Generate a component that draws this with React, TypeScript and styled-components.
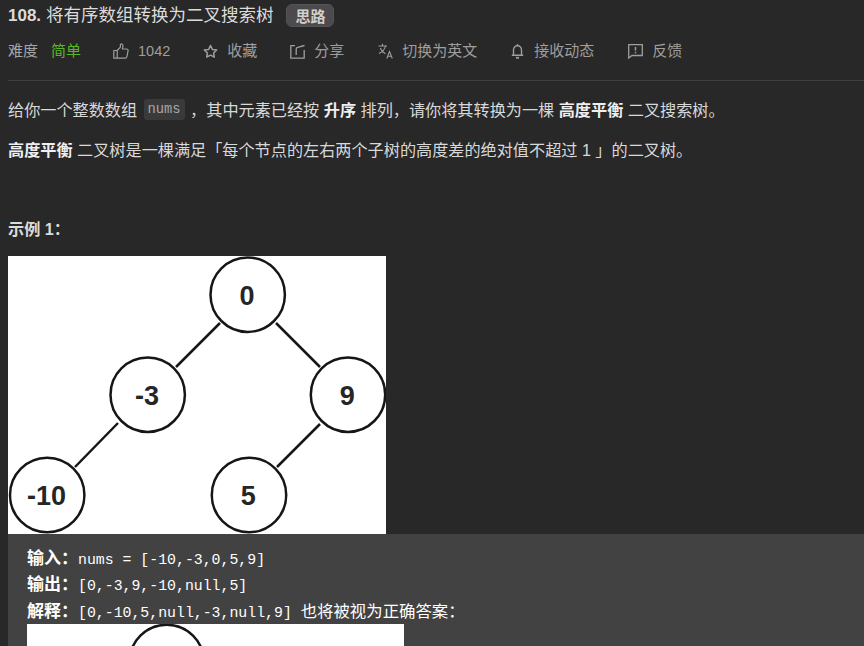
import React from 'react';
import styled, { createGlobalStyle } from 'styled-components';

const GlobalStyle = createGlobalStyle`
  html, body {
    margin: 0;
    padding: 0;
    height: 646px;
    overflow: hidden;
    background: #282828;
  }
`;

const Root = styled.div`
  height: 646px;
  overflow: hidden;
  padding: 0 0 0 8px;
  box-sizing: border-box;
  background: #282828;
  color: #a6a6a6;
  font-family: 'Liberation Sans', 'Noto Sans CJK SC', sans-serif;
  font-size: 15px;
`;

const TitleRow = styled.div`
  display: flex;
  align-items: center;
  height: 30px;
`;

const Title = styled.h1`
  margin: 0;
  font-size: 17.5px;
  font-weight: 400;
  color: #dcdcdc;
  line-height: 30px;
  white-space: nowrap;
`;

const TitleNum = styled.span`
  font-weight: 700;
  font-size: 17px;
`;

const Tag = styled.span`
  margin-left: 13px;
  width: 48px;
  height: 23px;
  margin-top: 1px;
  box-sizing: border-box;
  border: 1px solid #555355;
  border-radius: 6px;
  background: #4c4a4c;
  color: #d0d0d0;
  font-size: 15px;
  font-weight: 700;
  display: flex;
  align-items: center;
  justify-content: center;
`;

const MetaRow = styled.div`
  display: flex;
  align-items: center;
  height: 20px;
  margin-top: 11px;
  white-space: nowrap;
`;

const MetaItem = styled.span<{ $gap: number }>`
  display: flex;
  align-items: center;
  margin-left: ${(p) => p.$gap}px;
  color: #9e9e9e;
  svg {
    display: block;
    margin-right: 9px;
  }
`;

// the CJK face sits low in its line box, lift it level with the icons
const Label = styled.span`
  margin-bottom: 3px;
`;

const Count = styled.span`
  font-size: 14.5px;
`;

const Difficulty = styled(Label)`
  margin-left: 13px;
  color: #5ab726;
`;

const Divider = styled.div`
  height: 1px;
  margin-top: 19px;
  background: #3f3f3f;
`;

const Para = styled.p`
  margin: 0;
  font-size: 16.15px;
  line-height: 22px;
  color: #d9d9d9;
  white-space: nowrap;
  strong {
    font-weight: 700;
    color: #efefef;
  }
`;

const FirstPara = styled(Para)`
  margin-top: 18px;
`;

const SecondPara = styled(Para)`
  margin-top: 18px;
`;

const Code = styled.code`
  display: inline-block;
  width: 41px;
  height: 21px;
  line-height: 21px;
  margin: 0 1px 0 2px;
  border-radius: 3px;
  background: #3a3a3a;
  color: #a8a8a8;
  font-family: 'Liberation Mono', monospace;
  font-size: 13.75px;
  text-align: center;
  vertical-align: top;
`;

const ExampleHead = styled(Para)`
  margin-top: 57px;
  font-weight: 700;
  color: #dcdcdc;
`;

const DiagramBox = styled.div<{ $w: number; $h: number }>`
  width: ${(p) => p.$w}px;
  height: ${(p) => p.$h}px;
  background: #fff;
  overflow: hidden;
  svg {
    display: block;
  }
`;

const FirstDiagram = styled(DiagramBox)`
  margin-top: 16px;
`;

const Pre = styled.div`
  background: #424242;
  padding: 12px 0 0 19px;
  height: 112px;
  box-sizing: border-box;
  font-family: 'Liberation Mono', 'Noto Sans CJK SC', monospace;
  font-size: 14.85px;
  line-height: 26px;
  color: #ffffff;
`;

const PreLine = styled.div`
  height: 26px;
  white-space: pre;
  strong {
    font-family: 'Liberation Sans', 'Noto Sans CJK SC', sans-serif;
    font-size: 17px;
    font-weight: 700;
  }
`;

const NoteCjk = styled.span`
  font-family: 'Liberation Sans', 'Noto Sans CJK SC', sans-serif;
  font-size: 16.4px;
`;

const Node = ({ x, y, t }: { x: number; y: number; t: string }) => (
  <g>
    <circle cx={x} cy={y} r={37.2} fill="#fff" stroke="#161616" strokeWidth={2.5} />
    <text
      x={x - 0.7}
      y={y + 10}
      textAnchor="middle"
      fontFamily="'Liberation Sans', sans-serif"
      fontWeight="700"
      fontSize="27"
      fill="#262626"
    >
      {t}
    </text>
  </g>
);

const Edge = ({ d }: { d: number[] }) => (
  <line x1={d[0]} y1={d[1]} x2={d[2]} y2={d[3]} stroke="#161616" strokeWidth={2.5} />
);

// coordinates are relative to the image's top-left corner
const TreeImage = () => (
  <svg width="378" height="278" viewBox="0 0 378 278">
    <Edge d={[212, 67, 168, 111]} />
    <Edge d={[268, 67, 312, 111]} />
    <Edge d={[110, 167, 67, 211]} />
    <Edge d={[312, 168, 269, 211]} />
    <Node x={239.7} y={38.7} t="0" />
    <Node x={139.7} y={138.7} t="-3" />
    <Node x={340} y={138.7} t="9" />
    <Node x={39.2} y={239} t="-10" />
    <Node x={241} y={239} t="5" />
  </svg>
);

const ThumbIcon = () => (
  <svg width="16" height="16" viewBox="0 0 16 16" fill="none" stroke="#9e9e9e" strokeWidth="1.2" strokeLinejoin="round">
    <path d="M.8 7.5h3.4v7.7H.8zM4.2 7.5l3.2-3.3V1.8C7.4 1 8.4.6 9.2 1.2c.8.6 1 1.8.6 3L9.3 6h4.4c.9 0 1.6.8 1.4 1.7l-1.2 6c-.2.9-.8 1.5-1.7 1.5H4.2" />
  </svg>
);

const StarIcon = () => (
  <svg width="15" height="15" viewBox="0 0 15 15" fill="none" stroke="#9e9e9e" strokeWidth="1.5" strokeLinejoin="round">
    <path d="M7.5 1.5l1.900 3.900 4.300.6-3.100 3 .7 4.200-3.800-2-3.800 2 .7-4.200-3.100-3 4.300-.6z" />
  </svg>
);

const ShareIcon = () => (
  <svg width="15" height="15" viewBox="0 0 15 15" fill="none" stroke="#9e9e9e" strokeWidth="1.3">
    <path d="M5 1.7H.8v12.500h13.400V6" />
    <path d="M6.2 11V5c0-1 .5-1.500 1.500-1.700L14.500 1.500" />
  </svg>
);

const TranslateIcon = () => (
  <svg width="15" height="16" viewBox="0 0 15 16" fill="none" stroke="#9e9e9e" strokeWidth="1.1">
    <path d="M.5 3H9M4.500.8V3M7.500 3C6.800 6.200 4.300 9 1 10.500M2.300 5c1 2.800 3 4.700 5.200 5.800M8.800 15.500l2.700-7 2.800 7M9.700 13.300h3.700" />
  </svg>
);

const BellIcon = () => (
  <svg width="15" height="16" viewBox="0 0 15 16" fill="none" stroke="#9e9e9e" strokeWidth="1.4">
    <path d="M3.5 12V7c0-2.400 1.700-4.300 4-4.300s4 1.900 4 4.300v5M1.800 12.300h11.400" />
    <path d="M6 14.800h3" strokeWidth="1.8" />
    <circle cx="7.5" cy="1.7" r=".8" fill="#9e9e9e" stroke="none" />
  </svg>
);

const FeedbackIcon = () => (
  <svg width="15" height="15" viewBox="0 0 15 15" fill="none" stroke="#9e9e9e" strokeWidth="1.3">
    <path d="M.7.7h13.600v10.800H4L.7 14z" />
    <path d="M7.5 3v3.500M7.500 7.700v1.500" strokeWidth="1.5" />
  </svg>
);

export default function App() {
  return (
    <Root>
      <GlobalStyle />
      <TitleRow>
        <Title>
          <TitleNum>108.</TitleNum> 将有序数组转换为二叉搜索树
        </Title>
        <Tag>思路</Tag>
      </TitleRow>
      <MetaRow>
        <Label>难度</Label>
        <Difficulty>简单</Difficulty>
        <MetaItem $gap={32}>
          <ThumbIcon />
          <Count>1042</Count>
        </MetaItem>
        <MetaItem $gap={33}>
          <StarIcon />
          <Label>收藏</Label>
        </MetaItem>
        <MetaItem $gap={33}>
          <ShareIcon />
          <Label>分享</Label>
        </MetaItem>
        <MetaItem $gap={34}>
          <TranslateIcon />
          <Label>切换为英文</Label>
        </MetaItem>
        <MetaItem $gap={33}>
          <BellIcon />
          <Label>接收动态</Label>
        </MetaItem>
        <MetaItem $gap={34}>
          <FeedbackIcon />
          <Label>反馈</Label>
        </MetaItem>
      </MetaRow>
      <Divider />
      <FirstPara>
        给你一个整数数组 <Code>nums</Code> ，其中元素已经按 <strong>升序</strong> 排列，请你将其转换为一棵 <strong>高度平衡</strong> 二叉搜索树。
      </FirstPara>
      <SecondPara>
        <strong>高度平衡</strong> 二叉树是一棵满足「每个节点的左右两个子树的高度差的绝对值不超过 1 」的二叉树。
      </SecondPara>
      <ExampleHead>示例 1：</ExampleHead>
      <FirstDiagram $w={378} $h={278}>
        <TreeImage />
      </FirstDiagram>
      <Pre>
        <PreLine>
          <strong>输入：</strong>nums = [-10,-3,0,5,9]
        </PreLine>
        <PreLine>
          <strong>输出：</strong>[0,-3,9,-10,null,5]
        </PreLine>
        <PreLine>
          <strong>解释：</strong>[0,-10,5,null,-3,null,9] <NoteCjk>也将被视为正确答案：</NoteCjk>
        </PreLine>
        <DiagramBox $w={377} $h={60}>
          <svg width="377" height="60" viewBox="0 0 377 60">
            <circle cx={139.7} cy={38} r={37.2} fill="#fff" stroke="#161616" strokeWidth={2.5} />
          </svg>
        </DiagramBox>
      </Pre>
    </Root>
  );
}
